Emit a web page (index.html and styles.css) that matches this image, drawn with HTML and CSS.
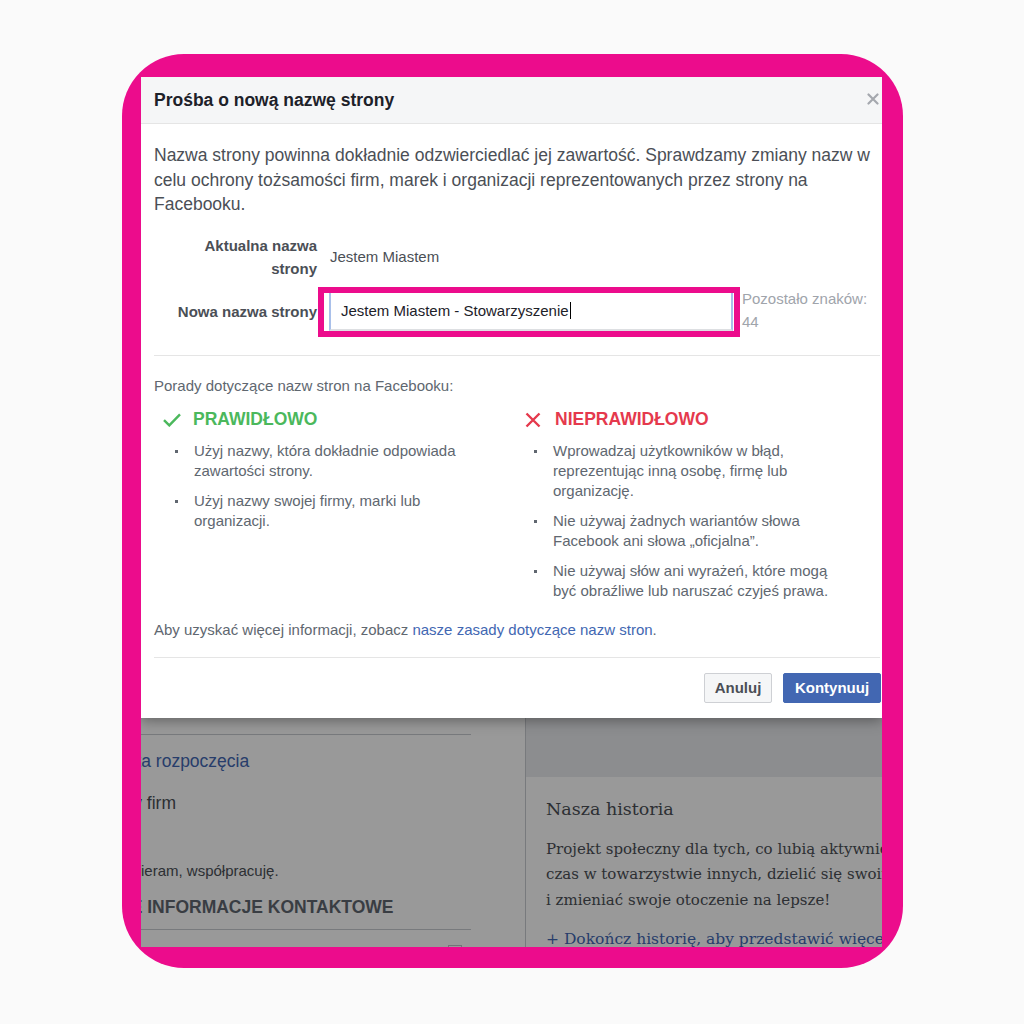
FILE: index.html
```html
<!DOCTYPE html>
<html lang="pl">
<head>
<meta charset="utf-8">
<title>Prośba o nową nazwę strony</title>
<link rel="stylesheet" href="styles.css">
</head>
<body>
<div class="frame">
  <div class="shot">
    <div class="modal">
      <div class="modal-head">
        <h2 class="modal-title">Prośba o nową nazwę strony</h2>
        <svg class="close" width="12" height="12" viewBox="0 0 12 12"><path d="M1.5 1.5 L10.5 10.5 M10.5 1.5 L1.5 10.5" stroke="#a5a8ae" stroke-width="2.2" stroke-linecap="round"/></svg>
      </div>
      <div class="modal-body">
        <p class="intro">Nazwa strony powinna dokładnie odzwierciedlać jej zawartość. Sprawdzamy zmiany nazw w celu ochrony tożsamości firm, marek i organizacji reprezentowanych przez strony na Facebooku.</p>
        <div class="form">
          <div class="label label-two">Aktualna nazwa strony</div>
          <div class="value">Jestem Miastem</div>
          <div class="label label-new">Nowa nazwa strony</div>
          <div class="field">
            <div class="input">Jestem Miastem - Stowarzyszenie<span class="caret"></span>
              <span class="highlight"></span>
            </div>
            <div class="remaining">Pozostało znaków: 44</div>
          </div>
        </div>
        <div class="sep sep-1"></div>
        <p class="tips-title">Porady dotyczące nazw stron na Facebooku:</p>
        <div class="tips">
          <div class="tip-col tip-good">
            <div class="tip-head">
              <span class="tip-icon"><svg width="18" height="14" viewBox="0 0 18 14"><path d="M1 7.2 L6.3 12.4 L17 1.4" fill="none" stroke="#4bb85c" stroke-width="2.4"/></svg></span>
              PRAWIDŁOWO
            </div>
            <ul class="tip-list">
              <li>Użyj nazwy, która dokładnie odpowiada zawartości strony.</li>
              <li>Użyj nazwy swojej firmy, marki lub organizacji.</li>
            </ul>
          </div>
          <div class="tip-col tip-bad">
            <div class="tip-head">
              <span class="tip-icon"><svg width="16" height="16" viewBox="0 0 16 16"><path d="M1.5 1.5 L14.5 14.5 M14.5 1.5 L1.5 14.5" fill="none" stroke="#e5394d" stroke-width="2.4"/></svg></span>
              NIEPRAWIDŁOWO
            </div>
            <ul class="tip-list">
              <li>Wprowadzaj użytkowników w błąd, reprezentując inną osobę, firmę lub organizację.</li>
              <li>Nie używaj żadnych wariantów słowa Facebook ani słowa „oficjalna”.</li>
              <li>Nie używaj słów ani wyrażeń, które mogą być obraźliwe lub naruszać czyjeś prawa.</li>
            </ul>
          </div>
        </div>
        <p class="more">Aby uzyskać więcej informacji, zobacz <a class="link" href="#">nasze zasady dotyczące nazw stron</a>.</p>
        <div class="sep sep-2"></div>
      </div>
      <div class="modal-foot">
        <button class="btn btn-cancel">Anuluj</button>
        <button class="btn btn-primary">Kontynuuj</button>
      </div>
    </div>

    <div class="page">
      <div class="left-card">
        <div class="left-inner">
          <div class="rule"></div>
          <p class="about-link">Data rozpoczęcia</p>
          <p class="about-text">Typy firm</p>
          <p class="about-small">Wspieram, współpracuję.</p>
          <p class="about-heading">DODATKOWE INFORMACJE KONTAKTOWE</p>
          <div class="rule rule-2"></div>
          <div class="check-row"><span class="checkbox"></span></div>
        </div>
      </div>
      <div class="right-col">
        <div class="cover"></div>
        <div class="story">
          <h3 class="story-title">Nasza historia</h3>
          <p class="story-text">Projekt społeczny dla tych, co lubią aktywnie spędzać<br>czas w towarzystwie innych, dzielić się swoimi pasjami<br>i zmieniać swoje otoczenie na lepsze!</p>
          <p class="story-link">+ Dokończ historię, aby przedstawić więcej</p>
        </div>
      </div>
    </div>
  </div>
</div>
</body>
</html>
```

FILE: styles.css
```css
* { box-sizing: border-box; margin: 0; padding: 0; }

body {
  background: #fafafa;
  font-family: "Liberation Sans", Arial, sans-serif;
}

.frame {
  margin: 54px 0 0 122px;
  width: 781px;
  height: 914px;
  background: #ec0c8c;
  border-radius: 62px;
  padding: 23px 21px 21px 19px;
}

.shot {
  width: 741px;
  height: 870px;
  overflow: hidden;
  background: #fff;
  display: flex;
  flex-direction: column;
  position: relative;
}

/* ---------- modal ---------- */
.modal {
  position: relative;
  z-index: 2;
  flex: none;
  background: #fff;
  box-shadow: 0 3px 12px rgba(0, 0, 0, 0.35);
}

.modal-head {
  height: 47px;
  background: #f5f6f7;
  border-bottom: 1px solid #e5e5e5;
  display: flex;
  align-items: center;
  justify-content: space-between;
  padding: 0 3px 0 13px;
}

.modal-title {
  font-size: 17.5px;
  font-weight: bold;
  color: #1d2129;
}

.close { margin-top: -2px; }

.modal-body {
  padding: 19px 2px 0 13px;
}

.intro {
  font-size: 17.5px;
  line-height: 24.5px;
  color: #4b4f56;
}

.form {
  margin: 17px 0 0 13px;
  display: grid;
  grid-template-columns: 150px auto;
  column-gap: 12px;
  row-gap: 7px;
  align-items: center;
}

.label {
  font-size: 15px;
  font-weight: bold;
  color: #4b4f56;
  text-align: right;
}

.label-two { line-height: 23px; }

.label-new {
  align-self: start;
  line-height: 20px;
  padding-top: 15px;
}

.value {
  font-size: 15px;
  color: #4b4f56;
  padding-left: 1px;
}

.field {
  display: flex;
  align-items: flex-start;
}

.input {
  position: relative;
  width: 404px;
  height: 40px;
  margin-top: 4px;
  border: 2px solid #a9c0ea;
  border-top-color: #dddfe2;
  border-bottom-color: #dddfe2;
  padding-left: 10px;
  display: flex;
  align-items: center;
  font-size: 15px;
  color: #1d2129;
}

.caret {
  display: inline-block;
  width: 1px;
  height: 17px;
  background: #000;
  margin-left: 1px;
}

.highlight {
  position: absolute;
  top: -6px;
  left: -13px;
  right: -9px;
  bottom: -8px;
  border: 6px solid #ec0c8c;
}

.remaining {
  width: 132px;
  margin-left: 9px;
  font-size: 15px;
  line-height: 23px;
  color: #a0a4ab;
}

.sep {
  border-top: 1px solid #e5e5e5;
}

.sep-1 { margin-top: 22px; }

.tips-title {
  margin-top: 20px;
  font-size: 15px;
  line-height: 20px;
  color: #606770;
}

.tips {
  margin-top: 14px;
  display: grid;
  grid-template-columns: 363px 363px;
}

.tip-head {
  display: flex;
  align-items: center;
  height: 20px;
  font-size: 17.5px;
  font-weight: bold;
}

.tip-icon {
  width: 18px;
  margin-right: 12px;
  display: flex;
  align-items: center;
}

.tip-good .tip-head { color: #4bb85c; padding-left: 9px; }
.tip-bad .tip-head { color: #e5394d; padding-left: 8px; }
.tip-bad .tip-icon { margin-right: 12px; }

.tip-list {
  list-style: none;
  margin-top: 11px;
}

.tip-good .tip-list { padding-left: 21px; }
.tip-bad .tip-list { padding-left: 17px; }

.tip-list li {
  display: flex;
  font-size: 15px;
  line-height: 20px;
  color: #606770;
  max-width: 309px;
}

.tip-list li::before {
  content: "";
  flex: none;
  width: 3px;
  height: 3px;
  background: #606770;
  margin: 9px 16px 0 0;
}

.tip-list li + li { margin-top: 10px; }

.more {
  margin-top: 19px;
  font-size: 15px;
  line-height: 20px;
  color: #606770;
}

.link {
  color: #4267b2;
  text-decoration: none;
}

.sep-2 { margin-top: 17px; }

.modal-foot {
  display: flex;
  justify-content: flex-end;
  gap: 11px;
  padding: 15px 1px 15px 0;
}

.btn {
  height: 30px;
  border-radius: 2px;
  font-family: "Liberation Sans", Arial, sans-serif;
  font-size: 15px;
  font-weight: bold;
  border: 1px solid;
}

.btn-cancel {
  width: 68px;
  background: #f5f6f7;
  border-color: #ced0d4;
  color: #4b4f56;
}

.btn-primary {
  width: 98px;
  background: #4267b2;
  border-color: #4267b2;
  color: #fff;
}

/* ---------- dimmed page ---------- */
.page {
  flex: 1;
  display: flex;
  position: relative;
  background: #e9ebee;
}

.page::after {
  content: "";
  position: absolute;
  inset: 0;
  background: rgba(0, 0, 0, 0.4);
  z-index: 1;
}

.left-card {
  flex: none;
  width: 384px;
  background: #fff;
  padding-top: 16px;
}

.left-inner {
  width: 330px;
  white-space: nowrap;
}

.rule { border-top: 1px solid #c9ccd1; }

.about-link {
  margin-top: 15px;
  font-size: 17.5px;
  line-height: 22px;
  color: #4267b2;
  text-indent: -27px;
}

.about-text {
  margin-top: 20px;
  font-size: 17.5px;
  line-height: 22px;
  color: #4b4f56;
  text-indent: -36px;
}

.about-small {
  margin-top: 47px;
  font-size: 15px;
  line-height: 20px;
  color: #4b4f56;
  text-indent: -30px;
}

.about-heading {
  margin-top: 15px;
  font-size: 17.5px;
  line-height: 22px;
  font-weight: bold;
  color: #606770;
  text-indent: -114px;
}

.rule-2 { margin-top: 11px; }

.check-row {
  display: flex;
  justify-content: flex-end;
  padding-right: 9px;
  margin-top: 15px;
}

.checkbox {
  width: 14px;
  height: 14px;
  border: 1px solid #bec3c9;
}

.right-col {
  flex: 1;
  min-width: 0;
  overflow: hidden;
  display: flex;
  flex-direction: column;
  border-left: 1px solid #c9ccd1;
}

.cover {
  height: 59px;
  background: #e9ebee;
}

.story {
  flex: 1;
  background: #fff;
  padding: 20px 0 0 20px;
  font-family: "DejaVu Serif", Georgia, serif;
  white-space: nowrap;
}

.story-title {
  font-size: 17.5px;
  line-height: 24px;
  font-weight: normal;
  color: #4b4f56;
}

.story-text {
  margin-top: 16px;
  font-size: 15px;
  line-height: 25.5px;
  color: #4b4f56;
}

.story-link {
  margin-top: 14px;
  font-size: 15.5px;
  line-height: 25.5px;
  color: #4267b2;
}
```
